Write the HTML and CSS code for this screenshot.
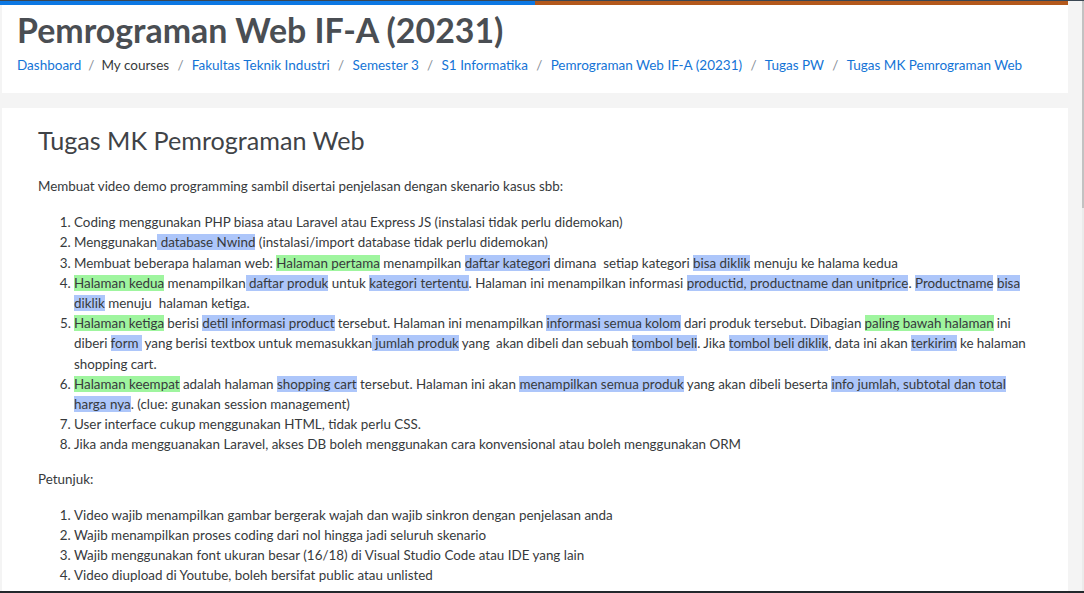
FILE: index.html
```html
<!DOCTYPE html>
<html lang="id">
<head>
<meta charset="utf-8">
<title>Tugas MK Pemrograman Web</title>
<link rel="stylesheet" href="styles.css">
</head>
<body>
<div class="window">
  <div class="topline"></div>
  <div class="frame">
    <div class="page">
      <div class="accent"><div class="accent-blue"></div><div class="accent-orange"></div></div>
      <header class="page-header">
        <h1 class="course-title">Pemrograman Web IF-A (20231)</h1>
        <nav class="breadcrumb">
          <a class="crumb" href="#">Dashboard</a>
          <span class="sep first">/</span>
          <span class="crumb current">My courses</span>
          <span class="sep">/</span>
          <a class="crumb" href="#">Fakultas Teknik Industri</a>
          <span class="sep">/</span>
          <a class="crumb" href="#">Semester 3</a>
          <span class="sep">/</span>
          <a class="crumb" href="#">S1 Informatika</a>
          <span class="sep">/</span>
          <a class="crumb" href="#">Pemrograman Web IF-A (20231)</a>
          <span class="sep">/</span>
          <a class="crumb" href="#">Tugas PW</a>
          <span class="sep">/</span>
          <a class="crumb" href="#">Tugas MK Pemrograman Web</a>
        </nav>
      </header>
      <section class="card">
        <h2 class="card-title">Tugas MK Pemrograman Web</h2>
        <p class="text">Membuat video demo programming sambil disertai penjelasan dengan skenario kasus sbb:</p>
        <ol class="list">
          <li>Coding menggunakan PHP biasa atau Laravel atau Express JS (instalasi tidak perlu didemokan)</li>
          <li>Menggunakan<span class="hl-blue"> database Nwind</span> (instalasi/import database tidak perlu didemokan)</li>
          <li>Membuat beberapa halaman web: <span class="hl-green">Halaman pertama</span> menampilkan <span class="hl-blue">daftar kategori</span> dimana&nbsp; setiap kategori <span class="hl-blue">bisa diklik</span> menuju ke halama kedua</li>
          <li><span class="hl-green">Halaman kedua</span> menampilkan<span class="hl-blue"> daftar produk</span> untuk <span class="hl-blue">kategori tertentu</span>. Halaman ini menampilkan informasi <span class="hl-blue">productid, productname dan unitprice</span>. <span class="hl-blue">Productname</span> <span class="hl-blue">bisa diklik</span> menuju&nbsp; halaman ketiga.</li>
          <li class="tight"><span class="hl-green">Halaman ketiga</span> berisi <span class="hl-blue">detil informasi product</span> tersebut. Halaman ini menampilkan <span class="hl-blue">informasi semua kolom</span> dari produk tersebut. Dibagian <span class="hl-green">paling bawah halaman</span> ini diberi <span class="hl-blue">form&nbsp;</span> yang berisi textbox untuk memasukkan<span class="hl-blue"> jumlah produk</span> yang&nbsp; akan dibeli dan sebuah <span class="hl-blue">tombol beli</span>. Jika <span class="hl-blue">tombol beli diklik</span>, data ini akan <span class="hl-blue">terkirim</span> ke halaman shopping cart.</li>
          <li><span class="hl-green">Halaman keempat</span> adalah halaman <span class="hl-blue">shopping cart</span> tersebut. Halaman ini akan <span class="hl-blue">menampilkan semua produk</span> yang akan dibeli beserta <span class="hl-blue">info jumlah, subtotal dan total harga nya</span>. (clue: gunakan session management)</li>
          <li>User interface cukup menggunakan HTML, tidak perlu CSS.</li>
          <li>Jika anda mengguanakan Laravel, akses DB boleh menggunakan cara konvensional atau boleh menggunakan ORM</li>
        </ol>
        <p class="text">Petunjuk:</p>
        <ol class="list">
          <li>Video wajib menampilkan gambar bergerak wajah dan wajib sinkron dengan penjelasan anda</li>
          <li>Wajib menampilkan proses coding dari nol hingga jadi seluruh skenario</li>
          <li>Wajib menggunakan font ukuran besar (16/18) di Visual Studio Code atau IDE yang lain</li>
          <li>Video diupload di Youtube, boleh bersifat public atau unlisted</li>
          <li>Link video dikumpulkan di bagian submission tugas ini</li>
        </ol>
      </section>
    </div>
    <div class="scrollbar"><div class="thumb"></div></div>
  </div>
</div>
<div class="bottom-edge"></div>
</body>
</html>
```
FILE: styles.css
```css
html, body {
  margin: 0;
  padding: 0;
  height: 100%;
  overflow: hidden;
}
body {
  background: #f4f4f4;
  font-family: Lato, "Open Sans", sans-serif;
  color: #373a3c;
  font-size: 13.4px;
  line-height: 20.2px;
}
.window {
  display: flex;
  flex-direction: column;
  height: 100%;
}
.topline {
  height: 1px;
  background: #3b4753;
  flex: none;
}
.frame {
  flex: 1;
  display: flex;
  min-height: 0;
}
.page {
  width: 1082px;
  flex: none;
}
.accent {
  display: flex;
  width: 1068px;
  height: 4px;
}
.accent-blue {
  width: 535px;
  background: #0d78e3;
}
.accent-orange {
  flex: 1;
  background: #b3581b;
}
.page-header {
  background: #fff;
  margin: 0 14px 0 2px;
  padding: 5px 15px 18px;
  height: 88px;
  box-sizing: border-box;
}
.course-title {
  margin: 0;
  font-size: 33.9px;
  line-height: 40.5px;
  font-weight: 700;
  color: #4a4e53;
}
.breadcrumb {
  margin-top: 4px;
  display: flex;
  flex-wrap: wrap;
  font-size: 13.5px;
  line-height: 20.25px;
}
.crumb {
  color: #1474d6;
  text-decoration: none;
}
.crumb.current {
  color: #373a3c;
}
.sep {
  color: #868e96;
  padding: 0 8.3px;
}
.sep.first {
  padding: 0 7px;
}
.card {
  background: #fff;
  margin: 15px 14px 0 2px;
  padding: 17px 36px;
  height: 600px;
}
.card-title {
  margin: 0 0 21px;
  font-size: 25.15px;
  line-height: 30.4px;
  font-weight: 400;
  color: #3f4347;
}
.text {
  margin: 0 0 15.5px;
}
.list {
  margin: 0 0 14.5px;
  padding-left: 36px;
}
.tight {
  word-spacing: -0.25px;
}
.hl-blue {
  background: #adc6fa;
}
.hl-green {
  background: #9ff59f;
}
.scrollbar {
  width: 2px;
  background: #ebebeb;
  flex: none;
}
.thumb {
  height: 207px;
  background: #c2c2c2;
}
.bottom-edge {
  position: fixed;
  left: 0;
  right: 0;
  bottom: 0;
  height: 2px;
  background: #23282c;
}
```
